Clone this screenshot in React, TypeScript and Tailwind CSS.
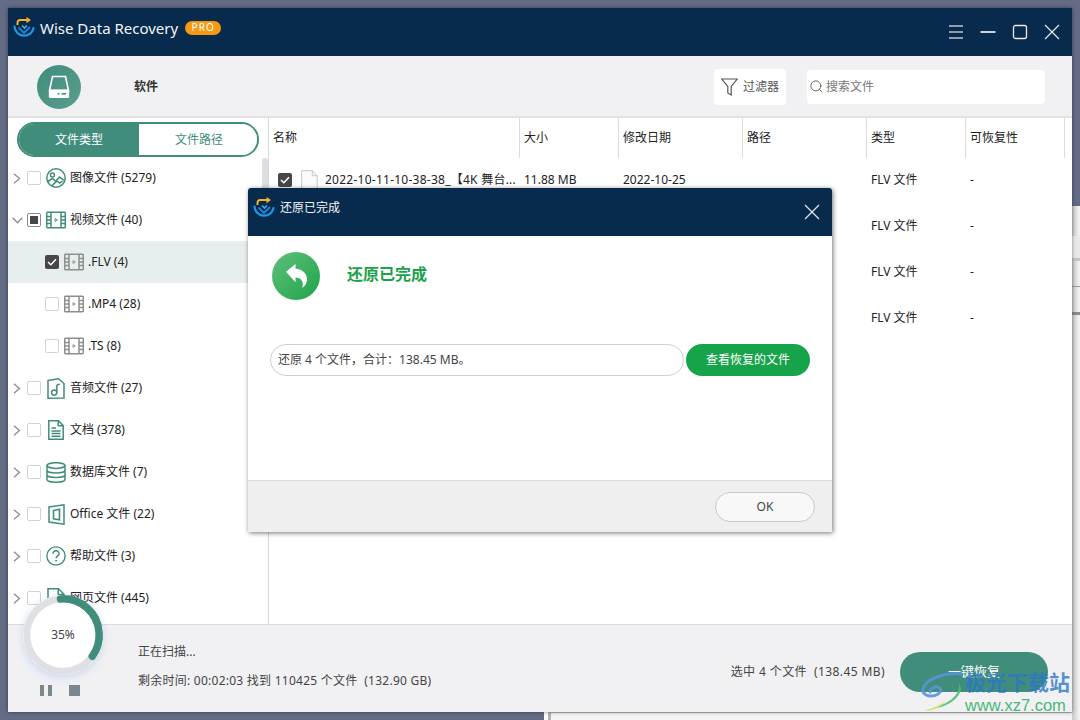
import { Search } from "lucide-react";

const GREEN = "#418d7c";

const Logo = () => (
  <svg width="22" height="22" viewBox="0 0 22 22" fill="none">
    <path d="M1.500 9.500a9.600 9.600 0 0 0 19 1.500" stroke="#1a9be8" strokeWidth="2.200" strokeLinecap="round" />
    <path d="M5.500 10.500l5.500 5.500 6-6" stroke="#1a86d8" strokeWidth="1.800" />
    <path d="M9 8.500l2.500 2.500 2.500-2.500" stroke="#3db0ee" strokeWidth="1.600" />
    <path d="M4.500 8V5.500a2.500 2.500 0 0 1 2.500-2.500h7" stroke="#f5b22b" strokeWidth="2" />
    <path d="M13.500 0l4.500 3-4.500 3.200z" fill="#f5b22b" />
  </svg>
);

const IconImage = () => (
  <svg width="20" height="20" viewBox="0 0 20 20" fill="none" stroke={GREEN} strokeWidth="1.500">
    <circle cx="10" cy="10" r="9.200" />
    <circle cx="6.400" cy="7" r="2" />
    <path d="M1.800 13.500l4.600-3 3.200 2.600 4-4 4.600 3.400M6 17.600l5-4.600 2.600 2 3-1.800" />
  </svg>
);

const IconVideo = ({ color = GREEN }: { color?: string }) => (
  <svg width="20" height="18" viewBox="0 0 20 18" fill="none" stroke={color} strokeWidth="1.500">
    <rect x="0.700" y="1.200" width="18.600" height="15.600" rx="1" />
    <path d="M5 1.200v15.600M15 1.200v15.600M0.700 5.500H5M0.700 9H5M0.700 12.500H5M15 5.500h4.300M15 9h4.300M15 12.500h4.300" />
    <path d="M9 7.500l2.400 1.500L9 10.500z" strokeWidth="0.900" />
  </svg>
);

const IconAudio = () => (
  <svg width="18" height="21" viewBox="0 0 18 21" fill="none" stroke={GREEN} strokeWidth="1.500">
    <path d="M1 2.400l10.500-1.600L17 5.500v14.600L1 20.200z" />
    <circle cx="7.200" cy="14.600" r="2.600" />
    <path d="M9.800 14.600V8c0-1 1-1.800 3-1.800" />
  </svg>
);

const IconDoc = () => (
  <svg width="16" height="20" viewBox="0 0 16 20" fill="none" stroke={GREEN} strokeWidth="1.500">
    <path d="M0.800 0.800h9.600l4.800 4.800v13.600H0.800z" />
    <path d="M10.200 1v4.800h5" />
    <path d="M3.500 8h4.500M3.500 11h9M3.500 13.600h9M3.500 16.200h9" strokeWidth="1.500" />
  </svg>
);

const IconDb = () => (
  <svg width="20" height="21" viewBox="0 0 20 21" fill="none" stroke={GREEN} strokeWidth="1.500">
    <ellipse cx="10" cy="3.600" rx="9" ry="2.800" />
    <path d="M1 3.600v13.800c0 1.600 4 2.800 9 2.800s9-1.200 9-2.800V3.600M1 8.200c0 1.600 4 2.800 9 2.800s9-1.200 9-2.800M1 12.800c0 1.600 4 2.800 9 2.800s9-1.200 9-2.800" />
  </svg>
);

const IconOffice = () => (
  <svg width="17" height="21" viewBox="0 0 17 21" fill="none" stroke={GREEN} strokeWidth="1.500">
    <path d="M1 3l15-2.200v19.400L1 18z" />
    <path d="M5.500 6.500l6-1.200v10.400l-6-1z" strokeWidth="1.600" />
  </svg>
);

const IconHelp = () => (
  <svg width="22" height="22" viewBox="0 0 22 22" fill="none" stroke={GREEN} strokeWidth="1.500">
    <circle cx="11" cy="11" r="10" />
    <path d="M7.800 8.400c0-4.200 6.600-4.200 6.600 0 0 2.400-3.300 2.600-3.300 5" strokeWidth="1.600" />
    <path d="M11.100 15.400v1.700" strokeWidth="1.800" />
  </svg>
);

const IconWeb = () => (
  <svg width="18" height="20" viewBox="0 0 18 20" fill="none" stroke={GREEN} strokeWidth="1.500">
    <path d="M1 0.800h10.500L17 6.200v13H1z" />
    <path d="M11.200 1v5.400H17" />
  </svg>
);

const FileIcon = () => (
  <svg width="17" height="21" viewBox="0 0 17 21" fill="none" stroke="#c4c6ca" className="shrink-0">
    <path d="M0.700 0.700h10.600l4.900 5v14.600H0.700z" fill="#fbfbfb" />
    <path d="M11.300 0.700v5h4.900" />
  </svg>
);

const Check = ({ state }: { state?: "checked" | "mixed" }) => {
  if (state === "checked") {
    return (
      <div className="flex h-[14px] w-[14px] shrink-0 items-center justify-center rounded-[2px] bg-[#46464b]">
        <svg width="10" height="8" viewBox="0 0 10 8" fill="none" stroke="#fff" strokeWidth="1.500">
          <path d="M1 4l2.800 2.700L9 1.200" />
        </svg>
      </div>
    );
  }
  if (state === "mixed") {
    return (
      <div className="flex h-[14px] w-[14px] shrink-0 items-center justify-center rounded-[2px] border border-[#8c8c90] bg-white">
        <div className="h-[8px] w-[8px] bg-[#46464b]" />
      </div>
    );
  }
  return <div className="h-[14px] w-[14px] shrink-0 rounded-[2px] border border-[#d2d3d6] bg-white" />;
};

const categories = [
  { label: "图像文件 (5279)", icon: <IconImage /> },
  { label: "视频文件 (40)", icon: <IconVideo />, open: true, state: "mixed" as const },
  { label: ".FLV (4)", sub: true, active: true, state: "checked" as const },
  { label: ".MP4 (28)", sub: true },
  { label: ".TS (8)", sub: true },
  { label: "音频文件 (27)", icon: <IconAudio /> },
  { label: "文档 (378)", icon: <IconDoc /> },
  { label: "数据库文件 (7)", icon: <IconDb /> },
  { label: "Office 文件 (22)", icon: <IconOffice /> },
  { label: "帮助文件 (3)", icon: <IconHelp /> },
  { label: "网页文件 (445)", icon: <IconWeb /> },
];

const columns = [
  { name: "名称", cls: "w-[251px]" },
  { name: "大小", cls: "w-[99px]" },
  { name: "修改日期", cls: "w-[124px]" },
  { name: "路径", cls: "w-[124px]" },
  { name: "类型", cls: "w-[99px]" },
  { name: "可恢复性", cls: "w-[99px]" },
];

const App = () => {
  return (
    <div
      className="relative h-[720px] w-[1080px] overflow-hidden bg-[#646b84] p-2 text-xs text-[#222]"
      style={{ fontFamily: '"Noto Sans", "Noto Sans CJK SC", sans-serif' }}
    >
      {/* other windows peeking out behind the app */}
      <div className="absolute bottom-0 left-[544px] h-[8px] w-[4px] bg-white" />
      <div className="absolute bottom-0 left-[548px] right-0 h-[8px] border-l-[3px] border-t border-[#b5b5b5] bg-[#f4f4f4]" />
      <div className="absolute bottom-0 right-0 top-[206px] w-[8px] bg-gradient-to-r from-[#c8c8c8] to-[#f6f6f6]" />
      <div className="absolute right-0 top-[236px] h-[22px] w-[8px] bg-[#e9e9e9]" />
      <div className="absolute right-0 top-[258px] h-[3px] w-[8px] bg-[#c4c4c4]" />
      <div className="absolute right-0 top-[286px] h-[1px] w-[8px] bg-[#999]" />
      <div className="absolute right-0 top-[312px] h-[3px] w-[8px] bg-[#8a8a8a]" />

      <div className="relative flex h-[704px] w-[1064px] flex-col bg-white shadow-[0_0_4px_rgba(0,0,0,0.45)]">
        <div className="flex h-[48px] shrink-0 items-center bg-[#082a4d] pl-[5px] pr-[12px] text-white">
          <div className="mb-[8px] flex items-center">
            <Logo />
            <span className="ml-[5px] text-[15px] text-[#f2f5f8]">Wise Data Recovery</span>
            <span className="ml-[7px] mt-[-1px] flex h-[14px] w-[36px] items-center justify-center rounded-full bg-[#f59a14] text-[10px] tracking-[1px] text-white">
              PRO
            </span>
          </div>
          <div className="ml-auto flex items-center gap-[16px]">
            <svg width="16" height="16" viewBox="0 0 16 16" stroke="#b9c2cc" strokeWidth="1.300">
              <path d="M1 2h14M1 8h14M1 14h14" />
            </svg>
            <svg width="16" height="16" viewBox="0 0 16 16" stroke="#fff" strokeWidth="1.600">
              <path d="M0.500 8h15" />
            </svg>
            <svg width="16" height="16" viewBox="0 0 16 16" fill="none" stroke="#e6eaee" strokeWidth="1.300">
              <rect x="1.500" y="1.500" width="13" height="13" rx="2" />
            </svg>
            <svg width="16" height="16" viewBox="0 0 16 16" stroke="#e6eaee" strokeWidth="1.200">
              <path d="M1 1l14 14M15 1L1 15" />
            </svg>
          </div>
        </div>

        <div className="flex h-[62px] shrink-0 items-center border-b-2 border-[#e0e0e2] bg-[#f1f1f4] pt-[1px]">
          <div className="ml-[29px] flex h-[44px] w-[44px] items-center justify-center rounded-full bg-gradient-to-br from-[#3f8d7c] to-[#5a9d8e]">
            <svg width="22" height="24" viewBox="0 0 22 24" fill="none">
              <path d="M4.500 1.500h13l3 14h-19z" stroke="#fff" strokeWidth="1.600" />
              <rect x="0.800" y="14.500" width="20.400" height="8.500" rx="1.600" fill="#fff" />
              <circle cx="10.500" cy="18.800" r="1" fill={GREEN} />
              <rect x="13.500" y="18" width="4.500" height="1.600" fill={GREEN} />
            </svg>
          </div>
          <span className="ml-[53px] font-bold text-[#333]">软件</span>
          <div className="ml-auto flex h-[36px] w-[72px] items-center justify-center gap-[5px] rounded-[4px] bg-white text-[#555]">
            <svg width="17" height="18" viewBox="0 0 17 18" fill="none" stroke="#555" strokeWidth="1.200">
              <path d="M0.800 1h15.400L10.200 8.500v8.400L6.800 15V8.500z" />
            </svg>
            过滤器
          </div>
          <div className="ml-[21px] mr-[27px] flex h-[34px] w-[238px] items-center gap-[2px] rounded-[4px] bg-white pl-[2px] text-[#777]">
            <Search size={15} strokeWidth={1.400} color="#555" />
            搜索文件
          </div>
        </div>

        <div className="flex min-h-0 flex-1">
          <div className="relative w-[261px] shrink-0 overflow-hidden border-r border-[#d8d8da]">
            <div className="ml-[9px] mt-[4px] flex h-[35px] w-[242px] overflow-hidden rounded-full border-2 border-[#418d7c]">
              <div className="flex w-[120px] items-center justify-center bg-[#418d7c] text-white">文件类型</div>
              <div className="flex flex-1 items-center justify-center bg-white pl-[2px] text-[#418d7c]">文件路径</div>
            </div>
            <div className="absolute right-0 top-[40px] h-[120px] w-[6px] rounded-full bg-[#dcdde0]" />
            <div>
              {categories.map((c) => (
                <div
                  key={c.label}
                  className={`flex h-[42px] items-center ${c.active ? "bg-[#e6efed]" : ""} ${c.sub ? "pl-[37px]" : "pl-[4px]"}`}
                >
                  {!c.sub && (
                    <div className="flex w-[15px] items-center">
                      {c.open ? (
                        <svg width="11" height="7" viewBox="0 0 11 7" fill="none" stroke="#8a8f99" strokeWidth="1.400">
                          <path d="M0.700 0.800l4.800 5 4.800-5" />
                        </svg>
                      ) : (
                        <svg width="8" height="11" viewBox="0 0 8 11" fill="none" stroke="#8a8f99" strokeWidth="1.400" className="ml-[1px]">
                          <path d="M1 0.700l5.500 4.800L1 10.300" />
                        </svg>
                      )}
                    </div>
                  )}
                  <Check state={c.state} />
                  <div className="ml-[5px] flex w-[20px] items-center justify-center">
                    {c.icon ?? <IconVideo color="#8e8e8e" />}
                  </div>
                  <span className="ml-[4px] whitespace-nowrap">{c.label}</span>
                </div>
              ))}
            </div>
          </div>

          <div className="min-w-0 flex-1">
            <div className="flex h-[40px]">
              {columns.map((col) => (
                <div key={col.name} className={`flex items-center border-r border-[#dcdcde] pl-[4px] ${col.cls}`}>
                  {col.name}
                </div>
              ))}
            </div>
            {[0, 1, 2, 3].map((i) => (
              <div key={i} className="flex h-[46px] items-center pb-[2px]">
                <div className="flex w-[251px] items-center pl-[9px]">
                  {i === 0 && (
                    <>
                      <Check state="checked" />
                      <div className="ml-[9px]">
                        <FileIcon />
                      </div>
                      <span className="ml-[7px] whitespace-nowrap tracking-[0.25px]">2022-10-11-10-38-38_【4K 舞台...</span>
                    </>
                  )}
                </div>
                <div className="w-[99px] pl-[4px]">{i === 0 && "11.88 MB"}</div>
                <div className="w-[124px] pl-[4px]">{i === 0 && "2022-10-25"}</div>
                <div className="w-[124px]" />
                <div className="w-[99px] pl-[4px]">FLV 文件</div>
                <div className="w-[99px] pl-[4px]">-</div>
              </div>
            ))}
          </div>
        </div>

        <div className="relative flex h-[88px] shrink-0 border-t border-[#dcdcde] bg-[#f1f1f4]">
          <div className="absolute left-[15px] top-[-30px] h-[80px] w-[80px] rounded-full bg-white shadow-[0_2px_8px_rgba(120,160,210,0.35)]">
            <svg width="80" height="80" viewBox="0 0 80 80" fill="none" className="absolute inset-0 -rotate-[94deg]">
              <circle cx="40" cy="40" r="36.200" stroke="#dfe0e4" strokeWidth="7" />
              <circle cx="40" cy="40" r="36.200" stroke={GREEN} strokeWidth="7.500" strokeLinecap="round" strokeDasharray="82 228" />
            </svg>
            <span className="absolute inset-0 flex items-center justify-center text-[#444]">35%</span>
          </div>
          <div className="absolute left-[32px] top-[60px] flex items-center gap-[17px]">
            <div className="flex gap-[4px]">
              <div className="h-[11px] w-[4px] bg-[#7b878f]" />
              <div className="h-[11px] w-[4px] bg-[#7b878f]" />
            </div>
            <div className="h-[11px] w-[11px] bg-[#7b878f]" />
          </div>

          <div className="ml-[130px] flex flex-col pt-[17px] text-[#444]">
            <span className="leading-[20px]">正在扫描...</span>
            <span className="mt-[9px] whitespace-nowrap leading-[20px] tracking-[0.25px]">
              剩余时间: 00:02:03 找到 110425 个文件&nbsp;&nbsp;(132.90 GB)
            </span>
          </div>
          <div className="ml-auto flex items-center pr-[24px] pt-[6px] text-[#444]">
            <span className="tracking-[0.4px]">选中 4 个文件&nbsp;&nbsp;(138.45 MB)</span>
            <div className="ml-[15px] flex h-[40px] w-[148px] items-center justify-center rounded-full bg-[#418d7c] text-[13px] text-white">
              一键恢复
            </div>
          </div>
        </div>

        {/* completed dialog */}
        <div className="absolute left-[240px] top-[180px] flex h-[344px] w-[584px] flex-col overflow-hidden rounded-t-[3px] bg-white shadow-[1px_1px_5px_rgba(0,0,0,0.55)]">
          <div className="flex h-[48px] shrink-0 items-center bg-[#082a4d] pl-[5px] pr-[12px] text-[#f2f5f8]">
            <div className="mb-[8px] flex items-center">
              <Logo />
              <span className="ml-[5px]">还原已完成</span>
            </div>
            <svg className="ml-auto" width="16" height="16" viewBox="0 0 16 16" stroke="#e6eaee" strokeWidth="1.200">
              <path d="M1 1l14 14M15 1L1 15" />
            </svg>
          </div>
          <div className="flex-1 px-[22px] pt-[16px]">
            <div className="flex items-center">
              <div className="ml-[2px] flex h-[48px] w-[48px] items-center justify-center rounded-full bg-gradient-to-br from-[#5cc07a] to-[#16a34a]">
                <svg width="23" height="26" viewBox="0 0 24 27" fill="#fff">
                  <path d="M1 9L11 1v5c7 .5 12 5 12 11 0 4-2 7-5 9 2-6-1-11-7-11v5z" />
                </svg>
              </div>
              <span className="ml-[27px] mt-[-2px] text-[16px] font-bold text-[#1aa34a]">还原已完成</span>
            </div>
            <div className="mt-[44px] flex gap-[2px]">
              <div className="flex h-[32px] w-[414px] items-center rounded-full border border-[#cfcfd2] pl-[7px] text-[#444]">
                还原 4 个文件，合计：138.45 MB。
              </div>
              <div className="flex h-[32px] w-[124px] items-center justify-center rounded-full bg-[#17a34a] text-white">
                查看恢复的文件
              </div>
            </div>
          </div>
          <div className="flex h-[52px] shrink-0 items-center justify-end border-t border-[#dcdcdc] bg-[#efefef] pr-[17px]">
            <div className="flex h-[30px] w-[100px] items-center justify-center rounded-full border border-[#c9c9cc] bg-[#f8f8f8] text-[#444]">
              OK
            </div>
          </div>
        </div>
      </div>

      {/* site watermark */}
      <div className="absolute left-[919px] top-[668px] flex items-start whitespace-nowrap">
        <svg width="42" height="40" viewBox="0 0 42 40" fill="none" className="ml-[2px] mt-[4px]">
          <path d="M41 2C26 0 5 6 2 17c-1 7 9 9 15 5 5-4 2-8-3-7-4 1-6 4-4 6" stroke="#5a94d8" strokeWidth="3" opacity="0.9" />
          <path d="M38 10c2 12-8 21-28 27 12-1 28-8 30-20z" fill="#4fbf72" opacity="0.9" />
          <path d="M5 38c8-2 14-5 20-9-4 5-10 9-20 10z" fill="#d9e36b" />
        </svg>
        <div className="ml-[2px] flex flex-col">
          <span className="text-[21px] font-bold leading-[28px] text-[#2a76c6]/80">极光下载站</span>
          <span
            className="text-[16.500px] leading-[18px] text-[#48b877]"
            style={{ fontFamily: '"Liberation Sans", sans-serif' }}
          >
            www.xz7.com
          </span>
        </div>
      </div>
    </div>
  );
};

export default App;
